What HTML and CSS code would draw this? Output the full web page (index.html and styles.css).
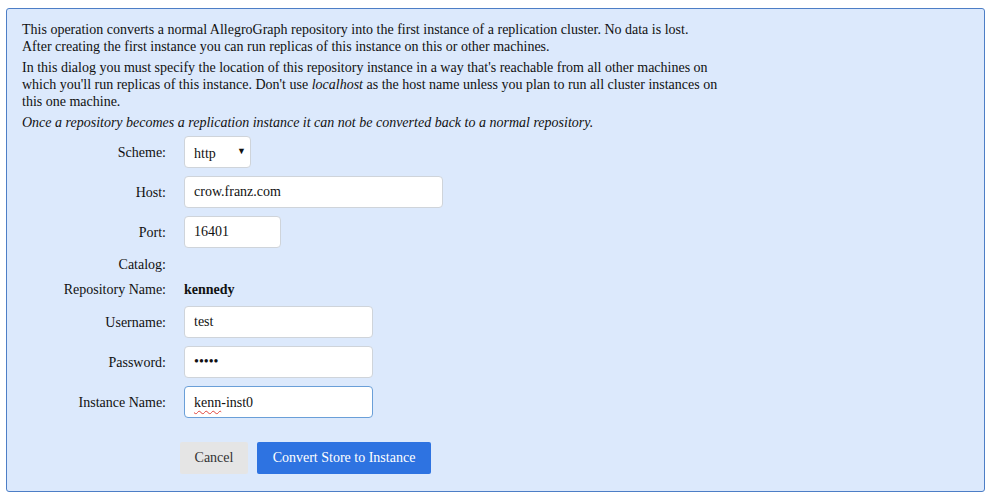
FILE: index.html
```html
<!DOCTYPE html>
<html>
<head>
<meta charset="utf-8">
<link rel="stylesheet" href="styles.css">
</head>
<body>
<div class="dialog">
  <p class="para">This operation converts a normal AllegroGraph repository into the first instance of a replication cluster. No data is lost.<br>After creating the first instance you can run replicas of this instance on this or other machines.</p>
  <p class="para">In this dialog you must specify the location of this repository instance in a way that's reachable from all other machines on which you'll run replicas of this instance. Don't use <em>localhost</em> as the host name unless you plan to run all cluster instances on this one machine.</p>
  <p class="para"><em>Once a repository becomes a replication instance it can not be converted back to a normal repository.</em></p>
  <div class="form">
    <label class="lbl">Scheme:</label>
    <div class="field">
      <div class="select-wrap">
        <select class="select"><option>http</option><option>https</option></select>
        <span class="arrow">▼</span>
      </div>
    </div>
    <label class="lbl">Host:</label>
    <div class="field"><input class="input w-host" type="text" value="crow.franz.com"></div>
    <label class="lbl">Port:</label>
    <div class="field"><input class="input w-port" type="text" value="16401"></div>
    <label class="lbl text-row">Catalog:</label>
    <div class="field text-row"></div>
    <label class="lbl text-row">Repository Name:</label>
    <div class="field text-row"><strong>kennedy</strong></div>
    <label class="lbl">Username:</label>
    <div class="field"><input class="input w-mid" type="text" value="test"></div>
    <label class="lbl">Password:</label>
    <div class="field"><input class="input w-mid" type="password" value="12345"></div>
    <label class="lbl">Instance Name:</label>
    <div class="field"><div class="input w-mid focused"><span class="typo">kenn</span>-inst0</div></div>
    <div class="lbl"></div>
    <div class="buttons">
      <button class="btn btn-cancel">Cancel</button>
      <button class="btn btn-primary">Convert Store to Instance</button>
    </div>
  </div>
</div>
</body>
</html>
```

FILE: styles.css
```css
html, body {
  background: #ffffff;
}
body {
  margin: 8px 12px 8px 6px;
  font-family: "Liberation Serif", "Times New Roman", serif;
  font-size: 14px;
  line-height: 17px;
  color: #111;
}
.dialog {
  background: #dce9fc;
  border: 1px solid #4d7ec6;
  border-radius: 3px;
  padding: 12px 15px 17px 15px;
}
.para {
  margin: 0 0 4px 0;
  max-width: 705px;
}
.form {
  margin-top: 5px;
  display: grid;
  grid-template-columns: 144px 1fr;
  column-gap: 18px;
  row-gap: 8px;
  align-items: center;
}
.lbl {
  text-align: right;
  color: #111;
}
.field {
  display: flex;
  align-items: center;
}
.text-row {
  height: 17px;
}
.select-wrap {
  position: relative;
  width: 67px;
  height: 32px;
}
.select {
  -webkit-appearance: none;
  appearance: none;
  width: 67px;
  height: 32px;
  box-sizing: border-box;
  border: 1px solid #cfd4da;
  border-radius: 4px;
  background: #fff;
  font-family: "Liberation Serif", "Times New Roman", serif;
  font-size: 14px;
  color: #111;
  padding: 2px 0 0 9px;
}
.arrow {
  position: absolute;
  right: 5px;
  top: 9px;
  font-size: 9px;
  line-height: 12px;
  color: #111;
  pointer-events: none;
}
.input {
  box-sizing: border-box;
  height: 32px;
  border: 1px solid #cfd4da;
  border-radius: 4px;
  background: #fff;
  font-family: "Liberation Serif", "Times New Roman", serif;
  font-size: 14px;
  color: #111;
  padding: 0 9px;
  outline: none;
}
div.input {
  display: flex;
  align-items: center;
}
.w-host { width: 259px; }
.w-port { width: 97px; }
.w-mid { width: 189px; }
.focused {
  border-color: #6a9fd8;
}
.typo {
  text-decoration: underline wavy #e0443c;
  text-decoration-thickness: 1px;
  text-underline-offset: 3px;
}
.buttons {
  display: flex;
  gap: 9px;
  margin-left: -4px;
  margin-top: 16px;
}
.btn {
  height: 32px;
  border: none;
  border-radius: 2px;
  font-family: "Liberation Serif", "Times New Roman", serif;
  font-size: 14px;
  padding: 0 14px;
}
.btn-cancel {
  background: #e5e5e5;
  color: #333;
  width: 68px;
}
.btn-primary {
  background: #2e73e1;
  color: #fff;
  width: 174px;
}
```
